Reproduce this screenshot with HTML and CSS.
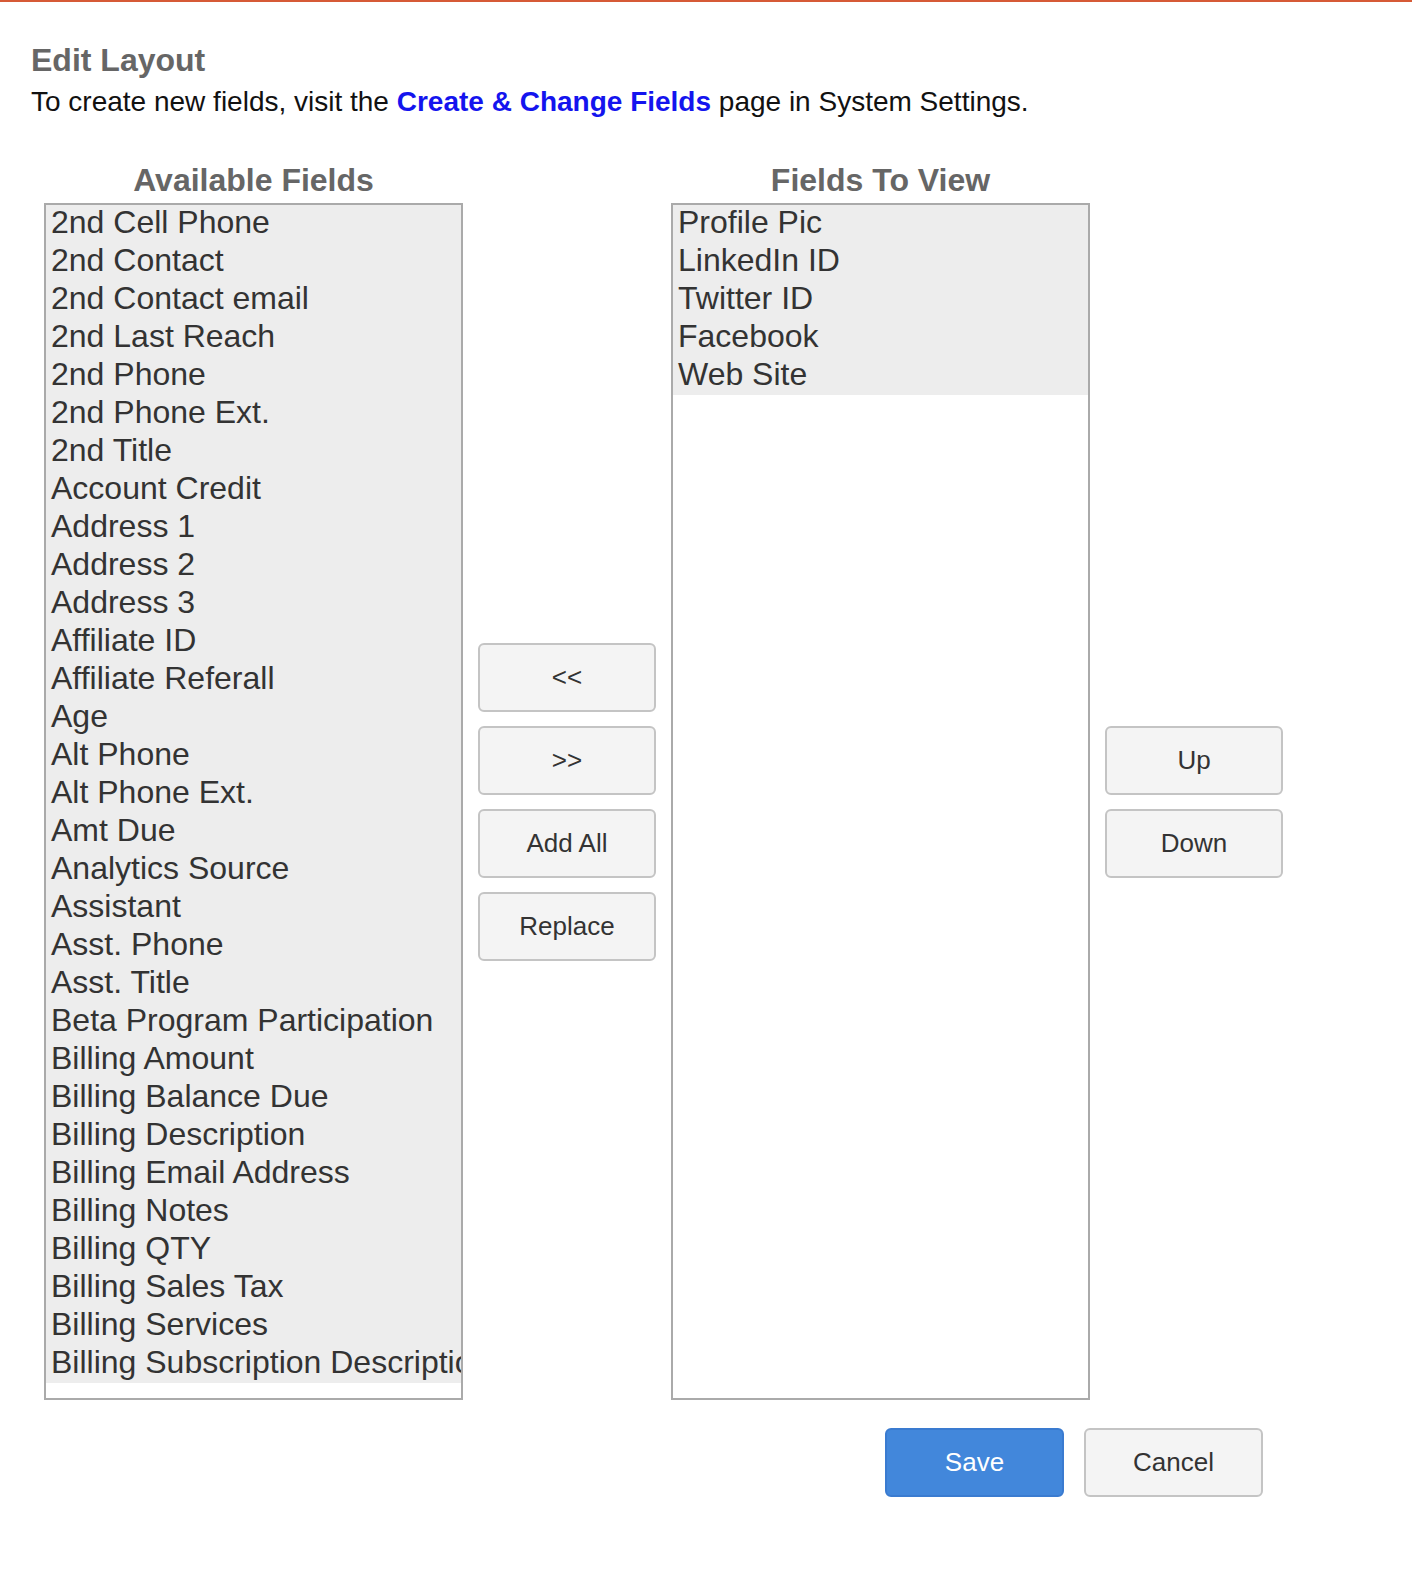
FILE: index.html
```html
<!DOCTYPE html>
<html lang="en">
<head>
    <meta charset="UTF-8">
    <meta name="viewport" content="width=device-width, initial-scale=1.0">
    <title>Edit Layout</title>
    <link rel="stylesheet" href="styles.css">
</head>
<body>
    <div class="page">
        <h1 class="title">Edit Layout</h1>
        <p class="intro">To create new fields, visit the <a href="#">Create &amp; Change Fields</a> page in System Settings.</p>

        <div class="layout-editor">
            <div class="col-heading">Available Fields</div>
            <div></div>
            <div class="col-heading">Fields To View</div>
            <div></div>

            <div class="field-list" id="available">
                <div class="field">2nd Cell Phone</div>
                <div class="field">2nd Contact</div>
                <div class="field">2nd Contact email</div>
                <div class="field">2nd Last Reach</div>
                <div class="field">2nd Phone</div>
                <div class="field">2nd Phone Ext.</div>
                <div class="field">2nd Title</div>
                <div class="field">Account Credit</div>
                <div class="field">Address 1</div>
                <div class="field">Address 2</div>
                <div class="field">Address 3</div>
                <div class="field">Affiliate ID</div>
                <div class="field">Affiliate Referall</div>
                <div class="field">Age</div>
                <div class="field">Alt Phone</div>
                <div class="field">Alt Phone Ext.</div>
                <div class="field">Amt Due</div>
                <div class="field">Analytics Source</div>
                <div class="field">Assistant</div>
                <div class="field">Asst. Phone</div>
                <div class="field">Asst. Title</div>
                <div class="field">Beta Program Participation</div>
                <div class="field">Billing Amount</div>
                <div class="field">Billing Balance Due</div>
                <div class="field">Billing Description</div>
                <div class="field">Billing Email Address</div>
                <div class="field">Billing Notes</div>
                <div class="field">Billing QTY</div>
                <div class="field">Billing Sales Tax</div>
                <div class="field">Billing Services</div>
                <div class="field">Billing Subscription Description</div>
            </div>

            <div class="btn-stack">
                <button class="btn">&lt;&lt;</button>
                <button class="btn">&gt;&gt;</button>
                <button class="btn">Add All</button>
                <button class="btn">Replace</button>
            </div>

            <div class="field-list" id="selected">
                <div class="field">Profile Pic</div>
                <div class="field">LinkedIn ID</div>
                <div class="field">Twitter ID</div>
                <div class="field">Facebook</div>
                <div class="field">Web Site</div>
            </div>

            <div class="btn-stack">
                <button class="btn">Up</button>
                <button class="btn">Down</button>
            </div>
        </div>

        <div class="actions">
            <button class="btn btn-primary">Save</button>
            <button class="btn">Cancel</button>
        </div>
    </div>
</body>
</html>
```

FILE: styles.css
```css
html, body {
    margin: 0;
    padding: 0;
    background: #fff;
    font-family: 'Liberation Sans', Arial, sans-serif;
}
body {
    border-top: 2px solid #d65a36;
}
.page {
    padding: 40px 0 60px 31px;
}
.title {
    margin: 0;
    font-size: 32px;
    line-height: 37px;
    font-weight: bold;
    color: #666;
}
.intro {
    margin: 7px 0 0;
    font-size: 28px;
    line-height: 32px;
    color: #111;
}
.intro a {
    color: #1414ee;
    font-weight: bold;
    text-decoration: none;
}
.layout-editor {
    display: grid;
    grid-template-columns: 419px 178px 419px 178px;
    column-gap: 15px;
    row-gap: 4px;
    margin: 44px 0 0 13px;
}
.col-heading {
    font-size: 32px;
    line-height: 37px;
    font-weight: bold;
    color: #666;
    text-align: center;
}
.field-list {
    height: 1193px;
    border: 2px solid #aaa;
    background: #fff;
    overflow: hidden;
}
.field {
    padding: 0 0 4px 5px;
    font-size: 32px;
    line-height: 34px;
    color: #333;
    background: #ededed;
    white-space: nowrap;
}
.btn-stack {
    align-self: center;
    display: flex;
    flex-direction: column;
    gap: 14px;
}
.btn {
    width: 178px;
    height: 69px;
    padding: 0;
    font-family: 'Liberation Sans', Arial, sans-serif;
    font-size: 26px;
    color: #333;
    background: #f4f4f4;
    border: 2px solid #c4c4c4;
    border-radius: 6px;
    cursor: pointer;
}
.btn:hover {
    background: #ebebeb;
}
.actions {
    display: flex;
    justify-content: flex-end;
    gap: 20px;
    width: 1232px;
    margin-top: 28px;
}
.actions .btn {
    width: 179px;
}
.btn-primary {
    color: #fff;
    background: #4287db;
    border-color: #3a7bd0;
}
.btn-primary:hover {
    background: #3a7bd0;
}
```
